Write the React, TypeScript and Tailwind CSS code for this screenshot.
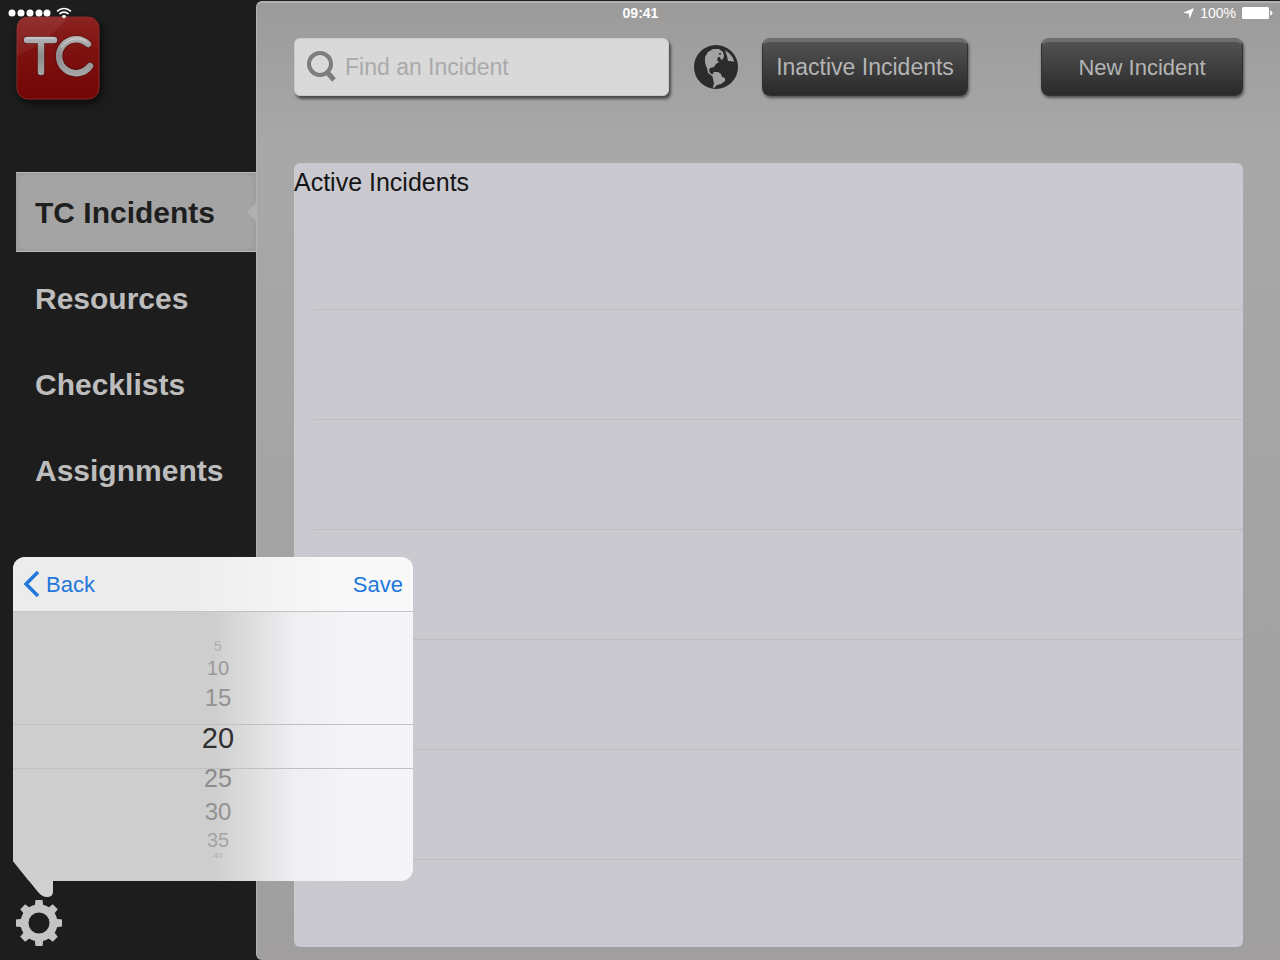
import React, { useState } from "react";

const navItems = ["TC Incidents", "Resources", "Checklists", "Assignments"];

// Intervals shown on the picker wheel, smaller and fainter towards the ends
const intervals = [
  { value: "5", row: "h-4", text: "text-sm text-[#adadad]" },
  { value: "10", row: "h-7", text: "text-xl text-[#9a9a9a]" },
  { value: "15", row: "h-8", text: "text-2xl text-[#929292]" },
  { value: "20", row: "h-12", text: "text-[29px] text-[#303030]" },
  { value: "25", row: "h-8", text: "text-[25px] text-[#8c8c8c]" },
  { value: "30", row: "h-9", text: "text-2xl text-[#929292]" },
  { value: "35", row: "h-5", text: "text-xl text-[#a4a4a4]" },
  { value: "40", row: "h-3", text: "text-[8px] text-[#b0b0b0]" },
];

const rows = [1, 2, 3, 4, 5, 6];

function StatusBar() {
  return (
    <div className="pointer-events-none absolute inset-x-0 top-0 z-20 grid h-[26px] grid-cols-3 items-center pl-2 pr-[7px] text-sm text-white">
      <div className="flex items-center gap-1">
        <svg width="44" height="8" viewBox="0 0 44 8" fill="currentColor">
          {[4, 13, 22, 31, 39].map((x) => (
            <circle key={x} cx={x} cy="4" r="3.5" />
          ))}
        </svg>
        <svg width="16" height="12" viewBox="0 0 16 12" fill="none" stroke="currentColor" strokeWidth="1.6">
          <path d="M1 4.4a10 10 0 0 1 14 0" />
          <path d="M3.4 7a6.6 6.6 0 0 1 9.2 0" />
          <path d="M8 11.5 5.6 9.2a3.4 3.4 0 0 1 4.8 0z" fill="currentColor" stroke="none" />
        </svg>
      </div>
      <span className="text-center font-bold">09:41</span>
      <div className="flex items-center justify-end gap-[6px]">
        <svg width="11" height="11" viewBox="0 0 11 11" fill="currentColor">
          <path d="M11 0 6.6 11 5.8 5.4 0 4.8z" />
        </svg>
        <span>100%</span>
        <svg width="31" height="12" viewBox="0 0 31 12" fill="currentColor">
          <rect width="27" height="12" rx="1.5" />
          <path d="M28.2 3.6c3 1 3 3.8 0 4.8z" />
        </svg>
      </div>
    </div>
  );
}

function Logo() {
  return (
    <svg width="84" height="84" viewBox="0 0 84 84" role="img" aria-label="TC" className="drop-shadow-[3px_4px_4px_rgba(0,0,0,0.6)]">
      <defs>
        <linearGradient id="red" x1="0" y1="0" x2="0" y2="1">
          <stop offset="0" stopColor="#8c2421" />
          <stop offset="0.4" stopColor="#7e1210" />
          <stop offset="1" stopColor="#720606" />
        </linearGradient>
        <linearGradient id="steel" gradientUnits="userSpaceOnUse" x1="0" y1="20" x2="0" y2="60">
          <stop offset="0" stopColor="#b8b8b8" />
          <stop offset="0.5" stopColor="#8c8c8c" />
          <stop offset="1" stopColor="#a8a8a8" />
        </linearGradient>
      </defs>
      <rect x="1" y="1" width="82" height="82" rx="11" fill="url(#red)" stroke="#8d2a27" />
      <path d="M1 40V12Q1 1 12 1h40Q32 26 1 40z" fill="#fff" opacity="0.06" />
      <g fill="none" strokeLinecap="round">
        <path d="M11 24h27M25 24v32M72 28a17 17 0 1 0 2 22" stroke="#3a0505" strokeWidth="8" opacity="0.6" />
        <path d="M11 24h27M25 24v32M72 28a17 17 0 1 0 2 22" stroke="url(#steel)" strokeWidth="6.5" />
        <path d="M11 22h27M71 26a17 17 0 0 0-25 5" stroke="#d4d4d4" strokeWidth="1" />
      </g>
    </svg>
  );
}

function Globe() {
  return (
    <svg width="44" height="44" viewBox="0 0 44 44">
      <circle cx="22" cy="22" r="22" fill="#2b2b2b" />
      <g fill="#a3a3a3">
        <path d="M14 7l5-3 6 0 4 3 1 4-1 3-2 1-1-3-2 0-1 3 2 2-3 2-2 3-4 1-1 2 1 3 3 2-1 1-4-3-1-5-1-2-1-4 0-5z" />
        <path d="M31 5l5 4 3 4 1 4-3-1-3 0-1-5z" />
        <path d="M20 27l4 0 3 2 1 3 3 1 0 3-4 3-4 1-3 3-1 0 1-5-1-4-1-4z" />
        <circle cx="26" cy="9" r="1" fill="#2b2b2b" />
      </g>
    </svg>
  );
}

function Gear() {
  return (
    <svg width="48" height="48" viewBox="0 0 48 48">
      <g fill="#c4c4c4">
        {[0, 45, 90, 135, 180, 225, 270, 315].map((deg) => (
          <path key={deg} d="M20.5 1h7l1 8h-9z" transform={`rotate(${deg} 24 24)`} />
        ))}
      </g>
      <circle cx="24" cy="24" r="14.5" fill="none" stroke="#c4c4c4" strokeWidth="8" />
    </svg>
  );
}

function IntervalPopover() {
  const [selected, setSelected] = useState("20");

  return (
    <div role="dialog" aria-label="Interval" className="absolute bottom-[79px] left-[13px] z-10 w-[400px]">
      <svg width="41" height="37" viewBox="0 0 41 37" className="absolute left-0 top-[304px]">
        <path d="M0 0 25 31Q29 36 34 36 40 36 40 31V0z" fill="#d0d0d0" />
      </svg>
      <div className="relative overflow-hidden rounded-xl rounded-bl-none bg-linear-to-r from-[#cecece] from-50% via-[#efeff2] via-70% to-[#f5f5f9] to-85% [clip-path:polygon(0_0,100%_0,100%_100%,16px_100%,0_calc(100%-20px))]">
        <div className="flex h-[55px] items-center justify-between border-b border-[#c4c4c6] bg-linear-to-r from-[#ececec] from-40% to-[#f8f8f9] to-80% px-[10px] text-[22px] text-[#2177dc]">
          <button className="flex items-center gap-[6px]">
            <svg width="17" height="28" viewBox="0 0 17 28" fill="none" stroke="currentColor" strokeWidth="3.5">
              <path d="M15 2 3 14l12 12" />
            </svg>
            Back
          </button>
          <button>Save</button>
        </div>
        <div className="relative flex h-[269px] flex-col items-center pt-[26px] pl-[10px]">
          <div className="absolute inset-x-0 top-[112px] h-[45px] border-y border-[#c0c0c2]" />
          {intervals.map(({ value, row, text }) => (
            <button
              key={value}
              aria-pressed={value === selected}
              onClick={() => setSelected(value)}
              className={`relative flex shrink-0 items-center justify-center ${text} leading-none ${row}`}
            >
              {value}
            </button>
          ))}
        </div>
      </div>
    </div>
  );
}

export default function App() {
  const [active, setActive] = useState("TC Incidents");

  return (
    <div className="relative flex min-h-screen bg-[#1d1d1d] font-['Liberation_Sans',Arial,sans-serif]">
      <StatusBar />

      <aside className="relative flex w-64 shrink-0 flex-col pt-4">
        <div className="pl-4">
          <Logo />
        </div>
        <nav className="mt-[72px] flex flex-col gap-[6px] pl-4">
          {navItems.map((item) => (
            <button
              key={item}
              onClick={() => setActive(item)}
              className={`relative flex h-20 items-center pl-[19px] text-left text-[30px] font-bold ${
                item === active
                  ? "border-y border-[#b9b9b9] bg-[#a4a4a4] text-[#1e1e1e] shadow-[inset_0_0_6px_rgba(0,0,0,0.08)]"
                  : "text-[#bdbdbd]"
              }`}
            >
              {item}
              {item === active && (
                <svg width="9" height="18" viewBox="0 0 9 18" className="absolute right-0">
                  <path d="M9 0v18L0 9z" fill="#b0b0b0" />
                </svg>
              )}
            </button>
          ))}
        </nav>
        <button aria-label="Settings" className="mt-auto mb-[13px] ml-[15px] self-start">
          <Gear />
        </button>
        <IntervalPopover />
      </aside>

      <main className="mt-px flex min-w-0 flex-1 flex-col rounded-l-md border-t-2 border-l border-[#b2b2b2] bg-linear-to-b from-[#9c9b9a] via-[#a9a8a8] via-15% to-[#a09e9e] px-[37px] pb-[13px]">
        <div className="mt-[35px] flex h-[58px] items-center">
          <label className="flex h-full w-[375px] items-center gap-[9px] rounded-md border border-[#c9c9c9] bg-[#d9d9da] pl-3 shadow-[2px_3px_3px_rgba(0,0,0,0.55)]">
            <svg width="29" height="32" viewBox="0 0 29 32" fill="none" stroke="#7d7d7f" strokeWidth="4">
              <circle cx="13" cy="13" r="11" />
              <path d="m20 21 7 8" strokeWidth="5" />
            </svg>
            <input
              type="search"
              aria-label="Find an Incident"
              placeholder="Find an Incident"
              className="min-w-0 flex-1 bg-transparent text-[23px] text-[#333] outline-none placeholder:text-[#aaaaab]"
            />
          </label>
          <button aria-label="Map" className="ml-[25px]">
            <Globe />
          </button>
          <button className="ml-6 h-full w-[206px] rounded-lg border border-t-4 border-[#303030] border-t-[#6e6e6e] bg-linear-to-b from-[#525252] to-[#2a2a2a] pb-[2px] text-[23px] text-[#b4b4b4] shadow-[1px_2px_3px_rgba(0,0,0,0.5)]">
            Inactive Incidents
          </button>
          <button className="ml-auto h-full w-[202px] rounded-lg border border-t-4 border-[#303030] border-t-[#6e6e6e] bg-linear-to-b from-[#525252] to-[#2a2a2a] pb-[2px] text-[22px] text-[#b4b4b4] shadow-[1px_2px_3px_rgba(0,0,0,0.5)]">
            New Incident
          </button>
        </div>

        <section className="mt-[67px] flex flex-1 flex-col rounded-md bg-[#cac9cf]">
          <h1 className="h-[37px] text-[25px] leading-[38px] text-[#151515]">Active Incidents</h1>
          <ul className="pl-5">
            {rows.map((row) => (
              <li key={row} className="h-[110px] border-b border-[#bdbdc2]" />
            ))}
          </ul>
        </section>
      </main>
    </div>
  );
}
